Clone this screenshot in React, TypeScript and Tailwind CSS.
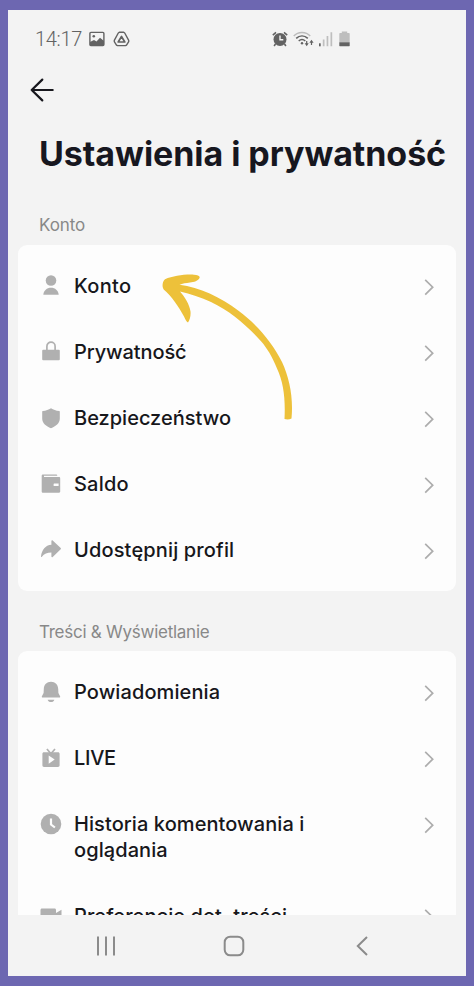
import type { ReactNode } from "react";

type Item = {
  label: string;
  icon: ReactNode;
  tracking: string;
};

const accountItems: Item[] = [
  {
    label: "Konto",
    tracking: "tracking-[0.3px]",
    icon: (
      <>
        <circle cx="11" cy="5.5" r="5.3" />
        <path d="M3.3 19.8c.4-4.300 3.500-7 7.700-7s7.300 2.700 7.700 7z" />
      </>
    ),
  },
  {
    label: "Prywatność",
    tracking: "tracking-[-0.1px]",
    icon: (
      <>
        <path
          d="M6.900 10V5.200a4.100 4.100 0 0 1 8.200 0V10"
          fill="none"
          stroke="currentColor"
          strokeWidth="1.7"
        />
        <rect x="2.200" y="8.800" width="17.600" height="10.400" rx="1" />
      </>
    ),
  },
  {
    label: "Bezpieczeństwo",
    tracking: "tracking-[0px]",
    icon: (
      <path d="M11 1.200c2.400 1.600 5 2.500 8.200 2.700.4 0 .6.200.6.600v7.200c0 4.400-4 7.600-8.800 9.500-4.800-1.900-8.800-5.100-8.800-9.500V4.500c0-.4.2-.6.600-.6C6 3.700 8.600 2.800 11 1.200z" />
    ),
  },
  {
    label: "Saldo",
    tracking: "tracking-[0.2px]",
    icon: (
      <path
        fillRule="evenodd"
        d="M3.200 1.400h13.200c.5 0 .8.300.8.700v.6H4v1.300h14.900c.9 0 1.300.4 1.300 1.200v13.300c0 .8-.4 1.200-1.300 1.200H3.100c-.9 0-1.400-.5-1.400-1.300V2.800c0-.9.6-1.400 1.500-1.400zM14.200 10.600c-.4 0-.6.200-.6.600v1.200c0 .4.2.6.600.6h4.400v-2.400z"
      />
    ),
  },
  {
    label: "Udostępnij profil",
    tracking: "tracking-[0.15px]",
    icon: (
      <path d="M11.400 2c0-.8.700-1.100 1.300-.6l8 7.600c.4.400.4.800 0 1.200l-8 7.900c-.6.500-1.300.2-1.300-.6v-4c-4.100 0-7.300 1.300-9.500 4.300-.4.500-1 .3-.9-.4C1.800 10.800 5.400 6.100 11.400 5.700z" />
    ),
  },
];

const contentItems: Item[] = [
  {
    label: "Powiadomienia",
    tracking: "tracking-[0.1px]",
    icon: (
      <>
        <path d="M11 .8c4.300 0 7 3.100 7.200 7.200l.2 4 1.700 3.300c.3.700 0 1.300-.8 1.300H2.700c-.8 0-1.100-.6-.8-1.300L3.600 12l.2-4C4 3.900 6.700.8 11 .8z" />
        <path d="M7.600 18.700h6.800c-.5 1.500-1.700 2.400-3.400 2.400s-2.900-.9-3.400-2.400z" />
      </>
    ),
  },
  {
    label: "LIVE",
    tracking: "tracking-[-0.3px]",
    icon: (
      <>
        <path
          d="M6.900 2 10.600 6.300M15 2 11.300 6.300"
          fill="none"
          stroke="currentColor"
          strokeWidth="1.7"
        />
        <path
          fillRule="evenodd"
          d="M4 5.200h14c1 0 1.600.6 1.600 1.600v11.500c0 1-.6 1.600-1.600 1.600H4c-1 0-1.600-.6-1.600-1.600V6.800c0-1 .6-1.600 1.600-1.600zM8.700 8.500v8.200l6-4.100z"
        />
      </>
    ),
  },
  {
    label: "Historia komentowania i oglądania",
    tracking: "tracking-[0.08px]",
    icon: (
      <>
        <circle cx="11" cy="11" r="10.3" />
        <path
          d="M11 5.500v6l3.900 3"
          fill="none"
          stroke="#fdfdfd"
          strokeWidth="2.2"
        />
      </>
    ),
  },
  {
    label: "Preferencje dot. treści",
    tracking: "tracking-[0.08px]",
    icon: (
      <path d="M2 3.500h12.500c1 0 1.500.6 1.500 1.500v3l5.500-3.300v12.600l-5.500-3v3c0 .9-.5 1.500-1.500 1.500H2c-1 0-1.500-.6-1.500-1.500V5c0-.9.5-1.500 1.500-1.500z" />
    ),
  },
];

const Row = ({ label, icon, tracking }: Item) => (
  <div className="flex items-start py-5 pl-[22px] pr-[22px]">
    <svg
      viewBox="0 0 22 22"
      fill="currentColor"
      className="mt-[2px] h-[22px] w-[22px] shrink-0 text-[#b0b0b0]"
    >
      {icon}
    </svg>
    <span
      className={`ml-3 w-[270px] text-[20px] font-medium leading-[26px] text-[#17171b] ${tracking}`}
    >
      {label}
    </span>
    <svg
      viewBox="0 0 10 18"
      fill="none"
      stroke="#adadad"
      strokeWidth="1.7"
      className="ml-auto mt-[5px] h-[18px] w-[10px] shrink-0"
    >
      <path d="M1.200 1.800 8.700 9.200 1.200 16.600" />
    </svg>
  </div>
);

const StatusBar = () => (
  <div className="flex h-[57px] items-center pl-[27px] pr-[116px] text-[#626262]">
    <span className="font-['Roboto',sans-serif] text-[20px] font-light tracking-[-0.3px]">
      14:17
    </span>
    {/* picture */}
    <svg viewBox="0 0 16 16" className="ml-[7px] h-4 w-4">
      <rect x=".9" y="1.400" width="14" height="13.200" rx="1" fill="none" stroke="currentColor" strokeWidth="1.400" />
      <path d="M1 11l4-2 2.500 1.500L11 6.800 15 10v4.500H1z" fill="currentColor" />
      <circle cx="4.800" cy="5.200" r="1.300" fill="currentColor" />
    </svg>
    {/* drive */}
    <svg
      viewBox="0 0 17 16"
      fill="none"
      stroke="currentColor"
      strokeWidth="1.400"
      strokeLinejoin="round"
      className="ml-[8px] h-4 w-[17px]"
    >
      <path d="M6.300 1.300h4.400l1 .7 4 7.400v1.200l-2.200 3.500-1 .5h-8l-1-.5-2.200-3.500V9.400l4-7.400z" />
      <path d="M8.500 5.500 5.200 11h6.600z" strokeWidth="1.700" />
    </svg>

    <div className="ml-auto flex items-center">
      {/* alarm */}
      <svg viewBox="0 0 16 16" className="h-4 w-4">
        <path d="M.8 4.100 4 1.300M15.200 4.100 12 1.300M3.500 13l-1.400 2M12.500 13l1.400 2" stroke="currentColor" strokeWidth="1.600" />
        <circle cx="8" cy="8.400" r="6.500" fill="currentColor" />
        <path d="M8 4.500v4.300h3.300" fill="none" stroke="#f3f3f3" strokeWidth="1.400" />
      </svg>
      {/* wifi */}
      <svg viewBox="0 0 21 16" fill="none" className="ml-[5px] h-4 w-[21px]">
        <path d="M.8 5C5.200.3 12.800.3 17.200 5" stroke="#bcbcbc" strokeWidth="1.600" />
        <path d="M3.200 7.400c3.500-3.300 8.100-3.300 11.600 0" stroke="currentColor" strokeWidth="1.600" />
        <path d="M5.700 10c2.100-1.900 4.500-1.900 6.600 0" stroke="currentColor" strokeWidth="1.500" />
        <circle cx="9" cy="12.200" r="1.200" fill="currentColor" />
        <path d="M11.700 12.300h4l-2 2.900zM16.400 11.700h4.200l-2.100-3z" fill="currentColor" />
        <path d="M13.700 10v3M18.500 11v3" stroke="currentColor" strokeWidth="1.200" />
      </svg>
      {/* signal */}
      <svg viewBox="0 0 14 16" className="ml-[5px] h-4 w-[14px]">
        <rect x="0" y="12.300" width="1.700" height="3" fill="currentColor" />
        <path d="M3.800 8.600h1.700v6.700H3.800zM7.600 5h1.700v10.300H7.600zM11.500 1.300h1.700v14h-1.700z" fill="#bebebe" />
      </svg>
      {/* battery */}
      <svg viewBox="0 0 11 16" className="ml-[6px] h-4 w-[11px]">
        <path d="M2.800.6h5.400v1.500H10c.4 0 .7.200.7.600v8.600H.3V2.700c0-.4.300-.6.700-.6h1.800z" fill="#bebebe" />
        <path d="M.3 11.300h10.400v3.500c0 .3-.2.500-.5.500H.8c-.3 0-.5-.2-.5-.5z" fill="currentColor" />
      </svg>
    </div>
  </div>
);

const App = () => {
  return (
    <div className="h-[986px] w-[474px] bg-[#6d67b1] px-2 py-[10px] font-['Inter',sans-serif]">
      <div className="flex h-[966px] flex-col overflow-hidden bg-[#f3f3f3]">
        <div className="h-[905px] overflow-hidden">
          <StatusBar />

          {/* header */}
          <div className="flex h-[46px] items-center pl-[22px]">
            <svg
              viewBox="0 0 24 24"
              fill="none"
              stroke="#17171d"
              strokeWidth="2.2"
              strokeLinecap="round"
              strokeLinejoin="round"
              className="h-6 w-6"
            >
              <path d="M12.300 1.600 1.700 12l10.600 10.400M1.700 12h21" />
            </svg>
          </div>
          <h1 className="mt-[16px] whitespace-nowrap pl-[31px] text-[34px] font-bold leading-[50px] tracking-[-0.06px] text-[#17171f]">
            Ustawienia i prywatność
          </h1>

          {/* account */}
          <h2 className="mt-[35px] pl-[31px] text-[17px] leading-[22px] tracking-[-0.1px] text-[#888888]">
            Konto
          </h2>
          <div className="relative mx-[10px] mt-[9px] rounded-[9px] bg-[#fdfdfd] py-2">
            {accountItems.map((item) => (
              <Row key={item.label} {...item} />
            ))}
            {/* hand drawn pointer */}
            <svg
              viewBox="0 0 134 150"
              fill="#edc13a"
              className="absolute left-[142px] top-[27px] h-[150px] w-[134px]"
            >
              <path d="M5 7.200C13 4 24 2.200 34 2.700c3.500.2 6.500 1.300 5.500 3.200-1.200 2.700-5.500 4.100-9.500 4.600-4 .7-7.500.8-10.500 2.300 20 2.700 41 12.200 59 26 18 13.200 34 32 43.500 51.200 7.500 16 11.500 36 9.500 56.500-2.200 1-4.700 1.200-7 .4 1-20-.8-36-7.500-50.500-5-12-10-20.500-16-27.200C87 53.500 70 39 51 30c-10-4.600-20.500-8-31-10.500 5 5.500 9.500 13 10.500 20 .4 3.700-.5 8.300-2.500 11-1.500-.5-2.500-3-4-6C18.500 34.500 12 24.500 3.700 17.500 2 15 2 10 5 7.200z" />
            </svg>
          </div>

          {/* content & display */}
          <h2 className="mt-[30px] pl-[31px] text-[17px] leading-[22px] tracking-[-0.26px] text-[#888888]">
            Treści &amp; Wyświetlanie
          </h2>
          <div className="mx-[10px] mt-[8px] rounded-t-[9px] bg-[#fdfdfd] pt-2">
            {contentItems.map((item) => (
              <Row key={item.label} {...item} />
            ))}
          </div>
        </div>

        {/* navigation */}
        <div className="flex h-[61px] items-center pl-[88px] text-[#8b8b8b]">
          <svg viewBox="0 0 20 20" stroke="currentColor" strokeWidth="2" className="h-5 w-5">
            <path d="M2 .5v19M10 .5v19M18 .5v19" />
          </svg>
          <svg viewBox="0 0 22 22" fill="none" stroke="currentColor" strokeWidth="2" className="ml-[107px] h-[22px] w-[22px]">
            <rect x="1.700" y="1.700" width="18.600" height="18.600" rx="5.500" />
          </svg>
          <svg viewBox="0 0 12 20" fill="none" stroke="currentColor" strokeWidth="2" className="ml-[111px] h-5 w-3">
            <path d="M11 1 1.800 10 11 19" />
          </svg>
        </div>
      </div>
    </div>
  );
};

export default App;
